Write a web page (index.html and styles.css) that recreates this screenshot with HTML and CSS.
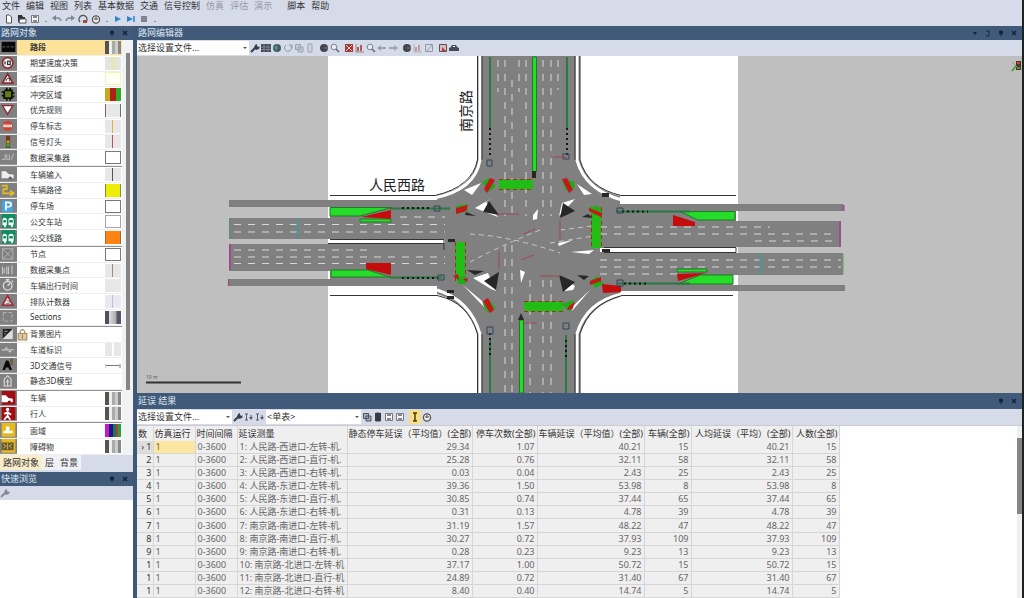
FILE: index.html
```html
<!DOCTYPE html>
<html lang="zh-CN">
<head>
<meta charset="utf-8">
<title>路网编辑器</title>
<link rel="stylesheet" href="styles.css">
</head>
<body>
<svg class="defs" aria-hidden="true">
  <defs>
    <symbol id="new" viewBox="0 0 10 10"><path d="M2.500 1h3l2 2v6h-5z" fill="#fff" stroke="#555"/></symbol>
    <symbol id="open" viewBox="0 0 10 10"><path d="M1 1h4l1 2h2v2H3L1 9z" fill="#333"/><path d="M3 5h6v4H2z" fill="#fff" stroke="#555"/></symbol>
    <symbol id="save" viewBox="0 0 10 10"><path d="M1.500 1.500h7v7h-7z" fill="#f4f6fa" stroke="#777"/><path d="M3 1h4v3H3zM3 6h4v3H3z" fill="#888"/></symbol>
    <symbol id="undo" viewBox="0 0 10 10"><path d="M2 4h4q2 0 3 3" fill="none" stroke="#7d8694" stroke-width="1.500"/><path d="M0 4l4-3v6z" fill="#7d8694"/></symbol>
    <symbol id="redo" viewBox="0 0 10 10"><path d="M8 4H4Q2 4 1 7" fill="none" stroke="#7d8694" stroke-width="1.500"/><path d="M10 4L6 1v6z" fill="#7d8694"/></symbol>
    <symbol id="loop" viewBox="0 0 10 10"><path d="M2 8a4 4 0 1 1 6 0" fill="none" stroke="#555" stroke-width="1.400"/><path d="M5 6h4v3H5z" fill="#a44"/></symbol>
    <symbol id="clock" viewBox="0 0 10 10"><circle cx="5" cy="5.500" r="3.600" fill="#eee" stroke="#555" stroke-width="1.300"/><path d="M3 5h4M5 3v3" stroke="#555"/></symbol>
    <symbol id="play" viewBox="0 0 10 10"><path d="M2 2l6 3-6 3z" fill="#2d86c8"/></symbol>
    <symbol id="step" viewBox="0 0 10 10"><path d="M1 2l6 3-6 3z" fill="#2d86c8"/><path d="M8 2v6" stroke="#2d86c8" stroke-width="1.500"/></symbol>
    <symbol id="stop" viewBox="0 0 10 10"><path d="M2 2h6v6H2z" fill="#7d8694"/></symbol>
    <symbol id="wrench" viewBox="0 0 10 10"><path d="M1 9l5-5" stroke="#3a4048" stroke-width="2"/><path d="M5 2l2-1v2l2 1 1-1-1 3-3 1-2-2z" fill="#3a4048"/></symbol>
    <symbol id="grid" viewBox="0 0 10 10"><path d="M0 1h10v8H0z" fill="#444b57"/><path d="M0 4h10M0 6.500h10M3 1v8M7 1v8" stroke="#9aa3b3" stroke-width=".6"/></symbol>
    <symbol id="globe" viewBox="0 0 10 10"><circle cx="5" cy="5" r="4" fill="#455b62"/><path d="M2 4l3-2 1 3-2 3z" fill="#4d927b"/></symbol>
    <symbol id="turn" viewBox="0 0 10 10"><path d="M3 2a3.500 3.500 0 1 0 5 1M6 2h3v3" fill="none" stroke="#8c96a6"/></symbol>
    <symbol id="copy" viewBox="0 0 10 10"><path d="M1.500 1.500h5v5h-5zM4 4h5v5H4z" fill="#c5ccda" stroke="#9aa3b3"/></symbol>
    <symbol id="pages" viewBox="0 0 10 10"><path d="M1.500 1.500h5v5h-5zM4 4h5v5H4z" fill="#a9afbb" stroke="#4c525d"/></symbol>
    <symbol id="doc" viewBox="0 0 10 10"><path d="M3 1h4v8H3z" fill="#d0d6e2" stroke="#9aa3b3"/></symbol>
    <symbol id="ball" viewBox="0 0 10 10"><circle cx="5" cy="5" r="4" fill="#3f4652"/><path d="M5 5h4" stroke="#a66"/></symbol>
    <symbol id="lens" viewBox="0 0 10 10"><circle cx="4" cy="4" r="2.800" fill="#e8ecf4" stroke="#7b8494"/><path d="M6 6l3 3" stroke="#666" stroke-width="1.500"/></symbol>
    <symbol id="close" viewBox="0 0 10 10"><path d="M1 1h8v8H1z" fill="#a7372f"/><path d="M2 2l6 6M8 2L2 8" stroke="#ead0ce"/></symbol>
    <symbol id="chart" viewBox="0 0 10 10"><path d="M1 1v8h8" fill="none" stroke="#888"/><path d="M3 4v4M6 2v6" stroke="#b45a52" stroke-width="2"/></symbol>
    <symbol id="back" viewBox="0 0 10 10"><path d="M0 5l4-3v2h5v2H4v2z" fill="#9da6b5"/></symbol>
    <symbol id="fwd" viewBox="0 0 10 10"><path d="M10 5L6 2v2H1v2h5v2z" fill="#9da6b5"/></symbol>
    <symbol id="edit" viewBox="0 0 10 10"><path d="M1.500 1.500h7v7h-7zM3 8l5-6" fill="none" stroke="#9299a6"/></symbol>
    <symbol id="pick" viewBox="0 0 10 10"><path d="M1.500 1.500h7v7h-7z" fill="#dbb" stroke="#555"/><path d="M4 4l4 4H4z" fill="#b33"/></symbol>
    <symbol id="car" viewBox="0 0 10 10"><path d="M0 5l2-1 1-2h4l1 2 2 1v3H0z" fill="#444b57"/><path d="M4 3h2v1H4z" fill="#fff"/></symbol>
    <symbol id="sort" viewBox="0 0 10 10"><path d="M1 2h3M1 8h3M2.500 2v6M7 3v3" stroke="#555b66" fill="none"/><path d="M5 5h4L7 8z" fill="#555b66"/></symbol>
    <symbol id="db" viewBox="0 0 10 10"><path d="M2 1q3-1 6 0v8q-3 1-6 0z" fill="#363b44"/></symbol>
    <symbol id="sum" viewBox="0 0 10 10"><path d="M3 1h4M3 9h4M5 1v8" stroke="#4b3d10" stroke-width="1.500"/></symbol>
    <symbol id="menu" viewBox="0 0 10 10"><path d="M3 4h4L5 7z" fill="#17263d"/></symbol>
    <symbol id="pin" viewBox="0 0 10 10"><path d="M3.500 3h3v3h-3zM5 6v2" fill="#17263d" stroke="#17263d"/></symbol>
    <symbol id="x" viewBox="0 0 10 10"><path d="M3 3l4 4M7 3L3 7" stroke="#17263d" stroke-width="1.600"/></symbol>
    <symbol id="win" viewBox="0 0 10 10"><path d="M3 3h3v5H3" fill="none" stroke="#17263d"/></symbol>
    <symbol id="busstop" viewBox="0 0 16 16"><path d="M0 0h16v16H0z" fill="#128c60"/><path d="M1 6q3-3 5 0v7H5v2H3v-2H1zM8 6q3-3 6 0v7h-1v2h-2v-2H8z" fill="#fff"/><path d="M2 7h3v3H2zM9 7h4v3H9z" fill="#128c60"/></symbol>
  </defs>
</svg>
<div class="app">
  <header>
    <nav class="menubar">
      <button>文件</button><button>编辑</button><button>视图</button><button>列表</button><button>基本数据</button><button>交通</button><button>信号控制</button><button class="dim">仿真</button><button class="dim">评估</button><button class="dim">演示</button><button class="script">脚本</button><button>帮助</button>
    </nav>
    <div class="toolbar main-tools">
      <button aria-label="新建"><svg><use href="#new"/></svg></button>
      <button aria-label="打开"><svg><use href="#open"/></svg></button>
      <button aria-label="保存"><svg><use href="#save"/></svg></button>
      <span class="dot">.</span>
      <button aria-label="撤销"><svg><use href="#undo"/></svg></button>
      <button aria-label="重做"><svg><use href="#redo"/></svg></button>
      <button aria-label="循环"><svg><use href="#loop"/></svg></button>
      <button aria-label="时间"><svg><use href="#clock"/></svg></button>
      <span class="dot">.</span>
      <button aria-label="运行"><svg><use href="#play"/></svg></button>
      <button aria-label="单步"><svg><use href="#step"/></svg></button>
      <button aria-label="停止"><svg><use href="#stop"/></svg></button>
      <span class="dot">.</span>
    </div>
  </header>
  <main>
    <aside>
      <h2 class="titlebar"><span>路网对象</span><button aria-label="固定"><svg><use href="#pin"/></svg></button><button aria-label="关闭"><svg><use href="#x"/></svg></button></h2>
      <div class="objects">
        <div class="list">
          <button class="row selected"><svg viewBox="0 0 16 16"><path d="M0 2h16v12H0z" fill="#080808"/><path d="M1 8h14" stroke="#777" stroke-dasharray="3 2"/></svg><span>路段</span><i class="sw road"></i></button>
          <button class="row"><svg viewBox="0 0 16 16"><circle cx="7" cy="8" r="6" fill="#fff" stroke="#8d2935" stroke-width="2"/><path d="M4 6v4M7 6h3v4H7z" fill="none" stroke="#333" stroke-width="1.500"/></svg><span>期望速度决策</span><i class="sw pale-yellow"></i></button>
          <button class="row"><svg viewBox="0 0 16 16"><path d="M7 2l6 11H1z" fill="#fff" stroke="#8d2935" stroke-width="2"/><path d="M5 11l1-3 3-1v4" fill="none" stroke="#333"/></svg><span>减速区域</span><i class="sw outline-yellow"></i></button>
          <button class="row"><svg viewBox="0 0 16 16"><path d="M3 3h2V1h2v2h2V1h2v2h2v3h2v2h-2v2h2v2h-2v2h-2v2H9v-2H7v2H5v-2H2v-3H0V9h2V7H0V5h3z" fill="#0b1206"/><path d="M4 5h7v7H4z" fill="#687b16"/></svg><span>冲突区域</span><i class="sw conflict"></i></button>
          <button class="row"><svg viewBox="0 0 16 16"><path d="M1 3h12L7 13z" fill="#fff" stroke="#8d2935" stroke-width="1.500"/></svg><span>优先规则</span><i class="sw rule"></i></button>
          <button class="row"><svg viewBox="0 0 16 16"><circle cx="7" cy="8" r="6" fill="#cf4332"/><path d="M2 8h10" stroke="#fff" stroke-width="3"/><path d="M3 8h8" stroke="#cf8b80"/></svg><span>停车标志</span><i class="sw line-orange"></i></button>
          <button class="row"><svg viewBox="0 0 16 16"><path d="M5 1h5v14H5z" fill="#514b38"/><circle cx="7.500" cy="4" r="2" fill="#a32319"/><circle cx="7.500" cy="8" r="2" fill="#b7a223"/><circle cx="7.500" cy="12" r="2" fill="#4a9c2a"/></svg><span>信号灯头</span><i class="sw line-red"></i></button>
          <button class="row"><svg viewBox="0 0 16 16"><path d="M0 11h4V5M6 5v6h3V5M14 4l-3 8" fill="none" stroke="#c6c6c6"/></svg><span>数据采集器</span><i class="sw box"></i></button>
          <hr>
          <button class="row"><svg viewBox="0 0 16 16"><path d="M0 5h5l3 3 6 1v4H0z" fill="#eee"/><circle cx="10" cy="13" r="2" fill="#666"/></svg><span>车辆输入</span><i class="sw line-dark"></i></button>
          <button class="row"><svg viewBox="0 0 16 16"><path d="M0 3h6v4H2v5h11M10 9l4 3-4 3" fill="none" stroke="#e3bd1e" stroke-width="2"/></svg><span>车辆路径</span><i class="sw yellow"></i></button>
          <button class="row"><svg viewBox="0 0 16 16"><rect x="0" y="2" width="13" height="13" rx="1" fill="#49a3de"/><path d="M5 13V4h3q3 0 3 2.500T8 9H5" fill="none" stroke="#fff" stroke-width="2"/></svg><span>停车场</span><i class="sw box"></i></button>
          <button class="row"><svg><use href="#busstop"/></svg><span>公交车站</span><i class="sw box soft"></i></button>
          <button class="row"><svg><use href="#busstop"/></svg><span>公交线路</span><i class="sw orange"></i></button>
          <hr>
          <button class="row"><svg viewBox="0 0 16 16"><path d="M1 2h12v12H1zM1 2l12 12M13 2L1 14" fill="none" stroke="#bbb"/></svg><span>节点</span><i class="sw box"></i></button>
          <button class="row"><svg viewBox="0 0 16 16"><path d="M1 4v9M3 12V6M6 4v9M8 4v9M12 3v10" stroke="#c8c8c8" stroke-width="1.300"/></svg><span>数据采集点</span><i class="sw line-brown"></i></button>
          <button class="row"><svg viewBox="0 0 16 16"><circle cx="7" cy="9" r="5" fill="none" stroke="#ddd" stroke-width="1.500"/><path d="M5 2h4M7 2v3M7 9l3-3M12 3l1 2" stroke="#ddd" stroke-width="1.500"/></svg><span>车辆出行时间</span><i class="sw plain"></i></button>
          <button class="row"><svg viewBox="0 0 16 16"><path d="M7 2l6 11H1z" fill="#eee" stroke="#a12e3d" stroke-width="2"/><path d="M5 11h4V8H6" fill="none" stroke="#777"/></svg><span>排队计数器</span><i class="sw line-violet"></i></button>
          <button class="row"><svg viewBox="0 0 16 16"><path d="M2 3h10v10H2z" fill="none" stroke="#bbb" stroke-dasharray="4 2"/></svg><span>Sections</span><i class="sw metal"></i></button>
          <hr>
          <button class="row locked"><svg viewBox="0 0 16 16"><path d="M1 2h12v12H1z" fill="#ddd"/><path d="M1 2h12L1 14z" fill="#222"/><path d="M3 5h4M3 8h2" stroke="#aaa"/></svg><svg class="lock" viewBox="0 0 10 12"><path d="M1 5h8v6H1z" fill="#e2c9a3" stroke="#a58963"/><path d="M3 5V3q2-3 4 0v2M5 6v4" fill="none" stroke="#a58963"/></svg><span>背景图片</span></button>
          <button class="row"><svg viewBox="0 0 16 16"><path d="M0 8h14M4 6h3M8 10h3" stroke="#ccc" stroke-width="1.500"/></svg><span>车道标识</span><i class="sw split"></i></button>
          <button class="row"><svg viewBox="0 0 16 16"><path d="M1 14L5 3h3l4 11H9L8 11H5l-1 3z" fill="#080808"/><path d="M10 1h3v7h-3z" fill="#685838"/><path d="M11 2v2" stroke="#c33"/><path d="M11 5v2" stroke="#4a4"/></svg><span>3D交通信号</span><i class="sw link"></i></button>
          <button class="row"><svg viewBox="0 0 16 16"><path d="M3 14V6l4-4 4 4v8zM7 6v8M5 9h4" fill="none" stroke="#ddd" stroke-width="1.300"/></svg><span>静态3D模型</span></button>
          <hr>
          <button class="row"><svg viewBox="0 0 16 16"><path d="M0 0h16v16H0z" fill="#a20c13"/><path d="M0 5h5l3 3 5 1v4H0z" fill="#fff"/><circle cx="9" cy="13" r="2" fill="#a20c13"/></svg><span>车辆</span><i class="sw road"></i></button>
          <button class="row"><svg viewBox="0 0 16 16"><path d="M0 0h16v16H0z" fill="#a20c13"/><circle cx="7" cy="3" r="2" fill="#fff"/><path d="M7 5v5l-4 5M7 10l3 5M3 8l4-2 4 3" fill="none" stroke="#fff" stroke-width="2"/></svg><span>行人</span><i class="sw road"></i></button>
          <hr>
          <button class="row"><svg viewBox="0 0 16 16"><path d="M0 0h16v16H0z" fill="#e6b91e"/><path d="M2 12V9h3V4h4v5h4v3z" fill="#fff"/></svg><span>面域</span><i class="sw rainbow"></i></button>
          <button class="row"><svg viewBox="0 0 16 16"><path d="M0 0h16v16H0z" fill="#e6b91e"/><path d="M0 4h14v9H0z" fill="#675a32"/><path d="M2 6l3 2-3 3M12 6L9 8l3 3M7 5v7" fill="none" stroke="#e6c65c"/></svg><span>障碍物</span><i class="sw road"></i></button>
        </div>
        <div class="scroll"><i></i></div>
      </div>
      <div class="tabs"><button class="active">路网对象</button><button>层</button><button>背景</button></div>
      <h2 class="titlebar"><span>快速浏览</span><button aria-label="固定浏览"><svg><use href="#pin"/></svg></button><button aria-label="关闭浏览"><svg><use href="#x"/></svg></button></h2>
      <div class="toolbar quick"><button aria-label="设置"><svg opacity=".5"><use href="#wrench"/></svg></button></div>
      <div class="blank"></div>
    </aside>
    <div class="work">
      <section class="editor">
        <h2 class="titlebar"><span>路网编辑器</span><button aria-label="菜单"><svg><use href="#menu"/></svg></button><button aria-label="窗口"><svg><use href="#win"/></svg></button><button aria-label="固定编辑器"><svg><use href="#pin"/></svg></button><button aria-label="关闭编辑器"><svg><use href="#x"/></svg></button></h2>
        <div class="toolbar">
          <span class="combo"><select aria-label="编辑器设置"><option>选择设置文件...</option></select></span>
          <button aria-label="配置"><svg><use href="#wrench"/></svg></button><button aria-label="网格"><svg><use href="#grid"/></svg></button><button aria-label="地图"><svg><use href="#globe"/></svg></button><button aria-label="旋转"><svg><use href="#turn"/></svg></button><button aria-label="复制"><svg><use href="#copy"/></svg></button><button aria-label="粘贴"><svg><use href="#doc"/></svg></button>
          <span class="gap"></span>
          <button aria-label="三维"><svg><use href="#ball"/></svg></button><button aria-label="放大"><svg><use href="#lens"/></svg></button>
          <span class="gap"></span>
          <button aria-label="全图"><svg><use href="#close"/></svg></button><button aria-label="图表"><svg><use href="#chart"/></svg></button><button aria-label="缩放"><svg><use href="#lens"/></svg></button><button aria-label="后退"><svg><use href="#back"/></svg></button><button aria-label="前进"><svg><use href="#fwd"/></svg></button>
          <span class="gap"></span>
          <button aria-label="对象"><svg><use href="#ball"/></svg></button><button aria-label="测量"><svg opacity=".5"><use href="#chart"/></svg></button><button aria-label="编辑形状"><svg><use href="#edit"/></svg></button>
          <span class="gap"></span>
          <button aria-label="选取"><svg><use href="#pick"/></svg></button><button aria-label="显示车辆"><svg><use href="#car"/></svg></button>
        </div>
        <svg class="map" viewBox="137 56 885 337" preserveAspectRatio="xMidYMid slice" role="img" aria-label="人民西路与南京路交叉口">
          <path d="M328 56h410v337H328z" fill="#fff"/>
          <g fill="#808080">
            <path d="M229 200H440V207H229zM229 218H440V239H229zM229 244H440V271H229zM229 279H440V286H229z"/>
            <path d="M330 207H445V218H330zM330 271H445V280H330z"/>
            <path d="M610 204H843V211H610zM610 221H841V247H610zM610 253H843V275H610zM610 285H845V291H610z"/>
            <path d="M610 211H736V221H610zM610 275H733V285H610z"/>
            <path d="M477 56H580V160Q588 188 620 196V297Q590 305 580 334V393H477V334Q470 304 437 294V195Q473 188 477 160z"/>
          </g>
          <g fill="none" stroke="#fff" stroke-width="3">
            <path d="M480 56V160Q475 190 434 198M577 56V160Q585 190 622 200H736M480 393V334Q470 300 437 290M577 393V334Q586 302 622 294H733M330 198H434M330 290H437"/>
            <path d="M330 241.500H445M600 250H736" stroke-width="4"/>
          </g>
          <g fill="none" stroke="#333">
            <path d="M477.500 56V160Q472 187 435 195.500H330M580 56V160Q588 188 621 195.500H736M477.500 393V334Q468 302 437 295.500H330M580 393V334Q589 304 622 295.500H733M482 56V160M575 56V160M482 334V393M575 334V393" stroke-width="1"/>
            <path d="M330 239.500H444V250M328 243.500H444M604 247.500H736V252.500H604"/>
          </g>
          <g fill="none" stroke="#d8d8d8" stroke-width="1" stroke-dasharray="7 7">
            <path d="M498 60V92M519 60V92M505 60V216M512 80V216M526 60V216M543 60V216M551 60V216M558 60V90"/>
            <path d="M505 245V393M512 245V393M530 280V393M543 280V393M551 280V393"/>
            <path d="M234 224.500H445M234 232H445M234 250H370M234 257H445M234 263.500H445M400 217H445"/>
            <path d="M600 227H770M600 234H838M755 241H838M600 260H841M600 267H841M600 274H680"/>
          </g>
          <path d="M470 234Q510 236 560 253M470 262Q500 246 540 230M560 230L600 225M550 243L600 235" fill="none" stroke="#c8c8c8" stroke-dasharray="5 4"/>
          <g fill="#25dc2b" stroke="#217a24" stroke-width="1">
            <path d="M532.500 57h4v115h-4zM519.500 320h4v73h-4z"/>
            <path d="M330 207.500H392L360 216H330zM331 270H368L390 277H331zM680 211.500H735V220H698zM700 275H733V284H678z"/>
            <path d="M360 219h31v3h-31zM677 269h30v3h-30z"/>
          </g>
          <g fill="none" stroke="#287943" stroke-width="2">
            <path d="M490 57V128M567 57V128M490 338V393M566 335V393M390 208.500H450M390 277.500H442M616 211.500H690M618 283.500H690"/>
            <path d="M490 128V158M567 128V158M490 333V356M566 340V357M402 208H430M402 278H438M622 211.500H648M624 283.500H648" stroke="#151515" stroke-dasharray="2 3"/>
          </g>
          <g fill="#c40c0c"><path d="M361 217L391 210V219zM366 263L391 265V275zM366 263H391V275L366 269zM673 215L695 222V226H673zM677 274L706 273 678 281zM602 284L621 286V292L603 293z"/></g>
          <g fill="none" stroke="#21bd16" stroke-width="10">
            <path d="M499 184.500H533M524 306.500H563M460 242V281M596 207V248"/>
          </g>
          <g fill="none" stroke="#af2721" stroke-width="1" stroke-dasharray="4 3">
            <path d="M499 179.500H533M499 189.500H533M524 301.500H563M524 311.500H563M455.500 242V281M465.500 242V281M591.500 207V248M601.500 207V248"/>
          </g>
          <g fill="#23aa17"><path d="M482 182L489 178 496 186 489 192zM562 180L574 181 575 188 566 191zM456 206L466 204 468 211 457 214zM589 207L598 206 603 213 594 216zM482 303L490 301 496 308 488 313zM561 304L574 300 570 312zM589 282L597 276 604 283 596 288zM457 277L466 276 466 284 458 284z"/></g>
          <g fill="#c4161b"><path d="M490 178L495 180 487 193 484 189zM562 179L567 178 573 190 569 193zM456 208L468 205 466 211 456 214zM589 208L602 213 601 217 589 211zM483 301L488 298 494 310 490 313zM569 306L575 302 574 308 567 310zM590 281L601 277 601 281 590 285zM453 276L458 274 459 280zM463 279L468 278 467 282z"/></g>
          <g fill="#fff"><path d="M475 208L492 198 486 202 498 217zM575 199L559 216 562 203zM473 278L488 273 496 291 491 289zM575 286L559 275 565 291 573 290zM533 215L538 209 537 219 533 220zM520 270L525 272 521 283zM558 243L573 240 559 246zM571 252L594 250 589 254zM464 190L481 183 472 195zM592 194L577 184 584 195zM463 285L482 301 484 307zM590 290L574 305 572 311z"/></g>
          <g fill="#272727"><path d="M489 201L499 215 483 212zM563 203L575 211 560 218zM484 281L499 272 496 290zM559 275L575 282 563 292zM465 215L476 216 466 212zM582 217L593 218 588 214zM467 270L484 271 475 275zM577 275L589 276 584 280zM532 171h4v7h-4zM521 313l3 7h-6zM602 193h7v4h-7zM447 290h7v3h-7zM447 296h7v3h-7zM448 239h7v3h-7zM602 249h8v3h-8z"/></g>
          <g fill="none" stroke="#30445d"><path d="M487 160h5v6h-5zM563 154h6v5h-6zM434 206h6v5h-6zM438 275h6v5h-6zM617 208h6v5h-6zM617 280h6v6h-6zM487 327h6v7h-6zM563 323h6v6h-6z"/></g>
          <g fill="none" stroke="#9d4658"><path d="M229.500 218v21" stroke="#4f9b69"/><path d="M230 244v26M840 221v26M843.500 205v6" stroke="#9e4b8d" stroke-width="2"/><path d="M228.500 279v7M553 157h14M497 214h22M523 234l12-5M521 260l13-5M499 251v18M560 220v20M540 276h20M524 323h13"/><path d="M297.500 219v20M760.500 254v20" stroke="#4a9598" stroke-width="2"/><path d="M843 254v20" stroke="#61a85b"/></g>
          <path d="M146 382.500h95" stroke="#333" stroke-width="2"/>
          <text x="146" y="379" class="scale">10 m</text>
          <text x="369" y="190" class="street">人民西路</text>
          <text x="471" y="132" class="street" transform="rotate(-90 471 132)">南京路</text>
          <path d="M1016 61h5v9h-5z" fill="#49382a"/><path d="M1017 63h3" stroke="#d04536" stroke-width="2"/><path d="M1017 68h3M1012 71l4-5" stroke="#4d9c3b" stroke-width="2"/><path d="M1012 62l5 5" stroke="#b79467"/>
        </svg>
      </section>
      <section class="results">
        <h2 class="titlebar"><span>延误 结果</span><button aria-label="固定结果"><svg><use href="#pin"/></svg></button><button aria-label="关闭结果"><svg><use href="#x"/></svg></button></h2>
        <div class="toolbar">
          <span class="combo short"><select aria-label="结果设置"><option>选择设置文件...</option></select></span>
          <button aria-label="配置列表"><svg><use href="#wrench"/></svg></button><button aria-label="升序"><svg><use href="#sort"/></svg></button><button aria-label="降序"><svg><use href="#sort"/></svg></button>
          <span class="combo short"><select aria-label="关联列表"><option>&lt;单表&gt;</option></select></span>
          <button aria-label="复制单元格"><svg><use href="#pages"/></svg></button><button aria-label="数据库"><svg><use href="#db"/></svg></button><button aria-label="保存列表"><svg><use href="#save"/></svg></button><button aria-label="另存列表"><svg><use href="#save"/></svg></button>
          <button class="on" aria-label="汇总"><svg><use href="#sum"/></svg></button><button aria-label="同步"><svg><use href="#clock"/></svg></button>
        </div>
        <div class="sheet">
          <table>
            <colgroup><col class="c-no"><col class="c-mid"><col class="c-mid"><col class="c-name"><col class="c-stop"><col class="c-times"><col class="c-delay"><col class="c-count"><col class="c-person"><col class="c-count"></colgroup>
            <thead><tr><th>数</th><th>仿真运行</th><th>时间间隔</th><th>延误测量</th><th>静态停车延误（平均值）(全部)</th><th>停车次数(全部)</th><th>车辆延误（平均值）(全部)</th><th>车辆(全部)</th><th>人均延误（平均）(全部)</th><th>人数(全部)</th></tr></thead>
            <tbody>
              <tr class="current"><td>›&nbsp;1</td><td>1</td><td>0-3600</td><td>1: 人民路-西进口-左转-机.</td><td>29.34</td><td>1.07</td><td>40.21</td><td>15</td><td>40.21</td><td>15</td></tr>
              <tr><td>2</td><td>1</td><td>0-3600</td><td>2: 人民路-西进口-直行-机.</td><td>25.28</td><td>0.76</td><td>32.11</td><td>58</td><td>32.11</td><td>58</td></tr>
              <tr><td>3</td><td>1</td><td>0-3600</td><td>3: 人民路-西进口-右转-机.</td><td>0.03</td><td>0.04</td><td>2.43</td><td>25</td><td>2.43</td><td>25</td></tr>
              <tr><td>4</td><td>1</td><td>0-3600</td><td>4: 人民路-东进口-左转-机.</td><td>39.36</td><td>1.50</td><td>53.98</td><td>8</td><td>53.98</td><td>8</td></tr>
              <tr><td>5</td><td>1</td><td>0-3600</td><td>5: 人民路-东进口-直行-机.</td><td>30.85</td><td>0.74</td><td>37.44</td><td>65</td><td>37.44</td><td>65</td></tr>
              <tr><td>6</td><td>1</td><td>0-3600</td><td>6: 人民路-东进口-右转-机.</td><td>0.31</td><td>0.13</td><td>4.78</td><td>39</td><td>4.78</td><td>39</td></tr>
              <tr><td>7</td><td>1</td><td>0-3600</td><td>7: 南京路-南进口-左转-机.</td><td>31.19</td><td>1.57</td><td>48.22</td><td>47</td><td>48.22</td><td>47</td></tr>
              <tr><td>8</td><td>1</td><td>0-3600</td><td>8: 南京路-南进口-直行-机.</td><td>30.27</td><td>0.72</td><td>37.93</td><td>109</td><td>37.93</td><td>109</td></tr>
              <tr><td>9</td><td>1</td><td>0-3600</td><td>9: 南京路-南进口-右转-机.</td><td>0.28</td><td>0.23</td><td>9.23</td><td>13</td><td>9.23</td><td>13</td></tr>
              <tr><td>1</td><td>1</td><td>0-3600</td><td>10: 南京路-北进口-左转-机</td><td>37.17</td><td>1.00</td><td>50.72</td><td>15</td><td>50.72</td><td>15</td></tr>
              <tr><td>1</td><td>1</td><td>0-3600</td><td>11: 南京路-北进口-直行-机</td><td>24.89</td><td>0.72</td><td>31.40</td><td>67</td><td>31.40</td><td>67</td></tr>
              <tr><td>1</td><td>1</td><td>0-3600</td><td>12: 南京路-北进口-右转-机</td><td>8.40</td><td>0.40</td><td>14.74</td><td>5</td><td>14.74</td><td>5</td></tr>
            </tbody>
          </table>
          <div class="sheet-scroll"><i></i></div>
        </div>
      </section>
    </div>
  </main>
</div>
</body>
</html>
```
FILE: styles.css
```css
* { box-sizing: border-box; }
body { margin: 0; background: #1d2420; font: 9px/12px "Noto Sans", "Noto Sans CJK SC", sans-serif; color: #333; }
button, select { font: inherit; color: inherit; border: 0; padding: 0; margin: 0; background: none; }
.defs { position: absolute; width: 0; height: 0; }
.app { display: flex; flex-direction: column; height: 100vh; margin-right: 2px; background: #d5dbe9; overflow: hidden; }
header { flex: none; }
.menubar { display: flex; gap: 6px; padding-left: 2px; height: 12px; }
.menubar .dim { opacity: .4; }
.menubar .script { margin-left: 9px; }
.toolbar { display: flex; align-items: center; flex: none; height: 16px; gap: 1px; background: #d5dbe9; }
.toolbar svg { display: block; width: 10px; height: 10px; }
.main-tools { height: 14px; gap: 3px; padding-left: 4px; }
.dot { width: 6px; text-align: center; }
.gap { width: 2px; }
main { flex: 1; min-height: 0; display: flex; }
aside { width: 137px; flex: none; display: flex; flex-direction: column; border-right: 4px solid #3f5878; }
.titlebar { display: flex; align-items: center; flex: none; height: 14px; margin: 0; padding: 0 3px 0 1px; background: #415a7a; color: #dfe6f0; font-size: 9px; font-weight: 400; }
.titlebar span { flex: 1; }
.titlebar button { margin-left: 3px; }
.titlebar svg { display: block; width: 10px; height: 10px; }
.objects { flex: 1; min-height: 0; display: flex; background: #f1f2f4; }
.list { flex: 1; display: flex; flex-direction: column; background: #fff; font-size: 8px; }
.list hr { width: 100%; height: 1px; margin: 0; border: 0; background: #929292; flex: none; }
.row { flex: 1 1 0; min-height: 0; display: grid; grid-template-columns: 17px 13px 1fr 17px; align-items: center; text-align: left; border-bottom: 1px solid #eee; }
.row > svg:first-child { display: block; width: 17px; height: 100%; background: #808080; border-bottom: 1px solid #999; }
.row span { grid-column: 3; }
.row .lock { width: 11px; height: 13px; }
.selected { background: #fde39a; font-weight: 700; }
.sw { grid-column: 4; width: 16px; height: 13px; background: #e7e7e7; }
.road { background: linear-gradient(90deg, #55554f 0 4px, #eee 4px 7px, #aaa 7px 10px, #ccc 10px 13px, #888 13px); }
.pale-yellow { background: linear-gradient(90deg, #e4e4e0 0 6px, #e8e8b4 6px 10px, #e4e4e0 10px); }
.outline-yellow { background: #fffff6; border: 1px solid #f3f3b4; }
.conflict { background: linear-gradient(90deg, #c7a91d 0 5px, #ac2118 5px 11px, #2cac24 11px); }
.rule { border-left: 1px solid #a65547; border-right: 1px solid #567a5a; }
.line-orange { background: linear-gradient(90deg, #e7e7e7 0 7px, #e7ab49 7px 8px, #e7e7e7 8px); }
.line-red { background: linear-gradient(90deg, #e7e7e7 0 7px, #b85260 7px 8px, #e7e7e7 8px); }
.line-dark { background: linear-gradient(90deg, #e7e7e7 0 7px, #555 7px 8px, #e7e7e7 8px); }
.line-brown { background: linear-gradient(90deg, #e7e7e7 0 7px, #a28b71 7px 8px, #e7e7e7 8px); }
.line-violet { background: linear-gradient(90deg, #e9e7ef 0 7px, #c4bfdc 7px 8px, #e9e7ef 8px); }
.split { background: linear-gradient(90deg, #e7e7e7 0 7px, #fff 7px 9px, #e7e7e7 9px); }
.box { background: #fff; border: 1px solid #777; }
.soft { border-color: #aaa49e; }
.yellow { background: #eded08; border-left: 1px solid #a87735; border-right: 1px solid #799444; }
.orange { background: #ff8411; border-left: 1px solid #a66a36; border-right: 1px solid #8b6b48; }
.metal { background: linear-gradient(90deg, #505064 0 4px, #ddd 4px, #aaa 11px, #55556a 12px); }
.link { background: linear-gradient(#777, #777) center / 14px 1px no-repeat; border-left: 1px solid #ccc; border-right: 2px solid #bbb; height: 4px; }
.rainbow { background: linear-gradient(90deg, #c31ac7 0 4px, #22128b 4px 8px, #1d7550 8px 11px, #a44 11px 13px, #2b9e3a 13px); }
.scroll { width: 11px; padding: 13px 3px 65px 4px; display: flex; }
.scroll i { flex: 1; background: #858585; }
.tabs { display: flex; flex: none; height: 17px; padding-bottom: 2px; }
.tabs button { padding: 0 3px; background: #f0f1f5; }
.tabs .active { background: #f9edca; }
.quick { height: 14px; }
.blank { height: 98px; flex: none; background: #fff; }
.work { flex: 1; min-width: 0; display: flex; flex-direction: column; }
.editor { flex: 1; min-height: 0; display: flex; flex-direction: column; }
.combo { position: relative; width: 112px; height: 14px; background: #fff; display: flex; }
.combo select { flex: 1; min-width: 0; appearance: none; padding-left: 1px; }
.combo::after { content: ""; position: absolute; right: 2px; top: 6px; border: 2px solid transparent; border-top-color: #555; }
.short { width: 95px; }
.toolbar .on { background: #f8df87; margin-left: 3px; padding: 2px 1px; }
.map { display: block; width: 100%; flex: 1; min-height: 0; background: #bfbfbf; }
.street { font: 14px "Liberation Serif", "Noto Sans CJK SC", serif; fill: #222; }
.scale { font-size: 5px; fill: #555; }
.results { flex: none; height: 205px; display: flex; flex-direction: column; }
.results .titlebar { height: 16px; }
.sheet { flex: 1; min-height: 0; display: flex; justify-content: space-between; background: #fff; border-top: 1px solid #ccc; }
.sheet table { width: 702px; height: 100%; table-layout: fixed; border-collapse: collapse; background: #efefef; }
.c-no { width: 16px; }
.c-mid { width: 42px; }
.c-name { width: 110px; }
.c-stop { width: 125px; }
.c-times { width: 65px; }
.c-delay { width: 107px; }
.c-count { width: 47px; }
.c-person { width: 101px; }
th, td { padding: 0 2px; line-height: 12px; white-space: nowrap; overflow: hidden; border-right: 1px solid #d6d6d6; border-bottom: 1px solid #d6d6d6; }
th { height: 15px; padding: 0 1px; font-weight: 400; text-align: left; color: #333; border-bottom: 0; }
th:nth-child(n+5) { text-align: right; }
td { color: #666; text-align: right; }
td:nth-child(2), td:nth-child(3), td:nth-child(4) { text-align: left; }
td:first-child { padding: 0 1px; color: #333; }
.current td:first-child { background: #ddd; }
.current td:nth-child(2) { background: #fde6a2; }
.sheet-scroll { width: 5px; padding-top: 12px; background: #eef0f3; }
.sheet-scroll i { display: block; height: 76px; background: #858585; }
```
